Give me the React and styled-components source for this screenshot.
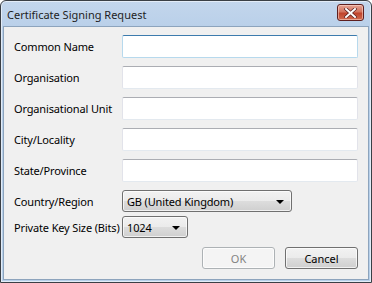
import React from "react";
import styled, { createGlobalStyle } from "styled-components";

const Global = createGlobalStyle`
  html, body { margin: 0; padding: 0; background: #ffffff; }
  body { font-family: "Noto Sans", "DejaVu Sans", sans-serif; }
  * { box-sizing: border-box; }
`;

const Window = styled.div`
  width: 372px;
  height: 283px;
  border: 1px solid #3a3f45;
  border-radius: 6px 6px 0 0;
  background: linear-gradient(#c3d6ec, #b8cfe9 30px, #b6d0ea);
  display: flex;
  flex-direction: column;
  padding: 0 2px 2px 2px;
  box-shadow: inset 0 0 0 1px #e3ecf7;
`;

const TitleBar = styled.div`
  height: 25px;
  flex: none;
  display: flex;
  align-items: center;
  justify-content: space-between;
  padding: 0 5px 0 4px;
`;

const Title = styled.span`
  font-size: 11px;
  color: #1e1e1e;
  padding-top: 1px;
`;

const CloseButton = styled.div`
  width: 27px;
  height: 17px;
  margin-top: -2px;
  border: 1px solid #5e1f1f;
  border-radius: 3px;
  background: linear-gradient(#e5a394, #d2745f 45%, #c0442c 55%, #cf6a4f);
  box-shadow: inset 0 0 0 1px rgba(255, 220, 210, 0.55);
  display: flex;
  align-items: center;
  justify-content: center;
`;

const Body = styled.div`
  flex: 1;
  background: #f0f0f0;
  border: 1px solid #8da4bd;
  padding: 8px 10px 0 10px;
  display: flex;
  flex-direction: column;
`;

const Form = styled.div`
  display: grid;
  grid-template-columns: 108px 236px;
  row-gap: ${(p) => p.$gap}px;
  align-items: center;
`;

const Label = styled.label`
  font-size: 11px;
  letter-spacing: -0.15px;
  color: #000;
  white-space: nowrap;
`;

const TextBox = styled.div`
  height: 23px;
  background: #fff;
  border: 1px solid;
  border-color: ${(p) =>
    p.$focused ? "#3d7bad #b7d9ed #b7d9ed #b7d9ed" : "#abadb3 #e2e3ea #e3e9ef #e2e3ea"};
  border-radius: 2px;
`;

const Combo = styled.div`
  width: ${(p) => p.$w}px;
  height: 22px;
  border: 1px solid #707070;
  border-radius: 3px;
  background: linear-gradient(#f2f2f2, #ebebeb 50%, #dddddd 50%, #cfcfcf);
  box-shadow: inset 0 0 0 1px rgba(255, 255, 255, 0.7);
  display: flex;
  align-items: center;
  justify-content: space-between;
  padding: 0 7px 0 4px;
  font-size: 11px;
  letter-spacing: -0.15px;
  color: #000;
`;

const Arrow = styled.span`
  width: 0;
  height: 0;
  border-left: 4px solid transparent;
  border-right: 4px solid transparent;
  border-top: 4px solid #000;
  margin-top: 1px;
`;

const ButtonRow = styled.div`
  display: flex;
  justify-content: flex-end;
  gap: 10px;
  width: 344px;
  margin-top: 9px;
`;

const Button = styled.div`
  width: 73px;
  height: 22px;
  border: 1px solid ${(p) => (p.$disabled ? "#adb2b5" : "#707070")};
  border-radius: 3px;
  background: ${(p) =>
    p.$disabled ? "#f4f4f4" : "linear-gradient(#f2f2f2, #ebebeb 50%, #dddddd 50%, #cfcfcf)"};
  box-shadow: inset 0 0 0 1px rgba(255, 255, 255, 0.7);
  display: flex;
  align-items: center;
  justify-content: center;
  font-size: 11px;
  color: ${(p) => (p.$disabled ? "#838383" : "#000")};
`;

const fields = [
  "Common Name",
  "Organisation",
  "Organisational Unit",
  "City/Locality",
  "State/Province",
];

export default function App() {
  return (
    <>
      <Global />
      <Window>
        <TitleBar>
          <Title>Certificate Signing Request</Title>
          <CloseButton>
            <svg width="13" height="10" viewBox="0 0 13 10">
              <path
                d="M2 1 L11 9 M11 1 L2 9"
                stroke="#5a2020"
                strokeWidth="3.4"
                strokeLinecap="square"
              />
              <path
                d="M2 1 L11 9 M11 1 L2 9"
                stroke="#ffffff"
                strokeWidth="2"
                strokeLinecap="square"
              />
            </svg>
          </CloseButton>
        </TitleBar>
        <Body>
          <Form $gap={8}>
            {fields.map((f, i) => (
              <React.Fragment key={f}>
                <Label>{f}</Label>
                <TextBox $focused={i === 0} />
              </React.Fragment>
            ))}
          </Form>
          <Form $gap={4} style={{ marginTop: 8 }}>
            <Label>Country/Region</Label>
            <Combo $w={170}>
              <span>GB (United Kingdom)</span>
              <Arrow />
            </Combo>
            <Label>Private Key Size (Bits)</Label>
            <Combo $w={66}>
              <span>1024</span>
              <Arrow />
            </Combo>
          </Form>
          <ButtonRow>
            <Button $disabled>OK</Button>
            <Button>Cancel</Button>
          </ButtonRow>
        </Body>
      </Window>
    </>
  );
}
